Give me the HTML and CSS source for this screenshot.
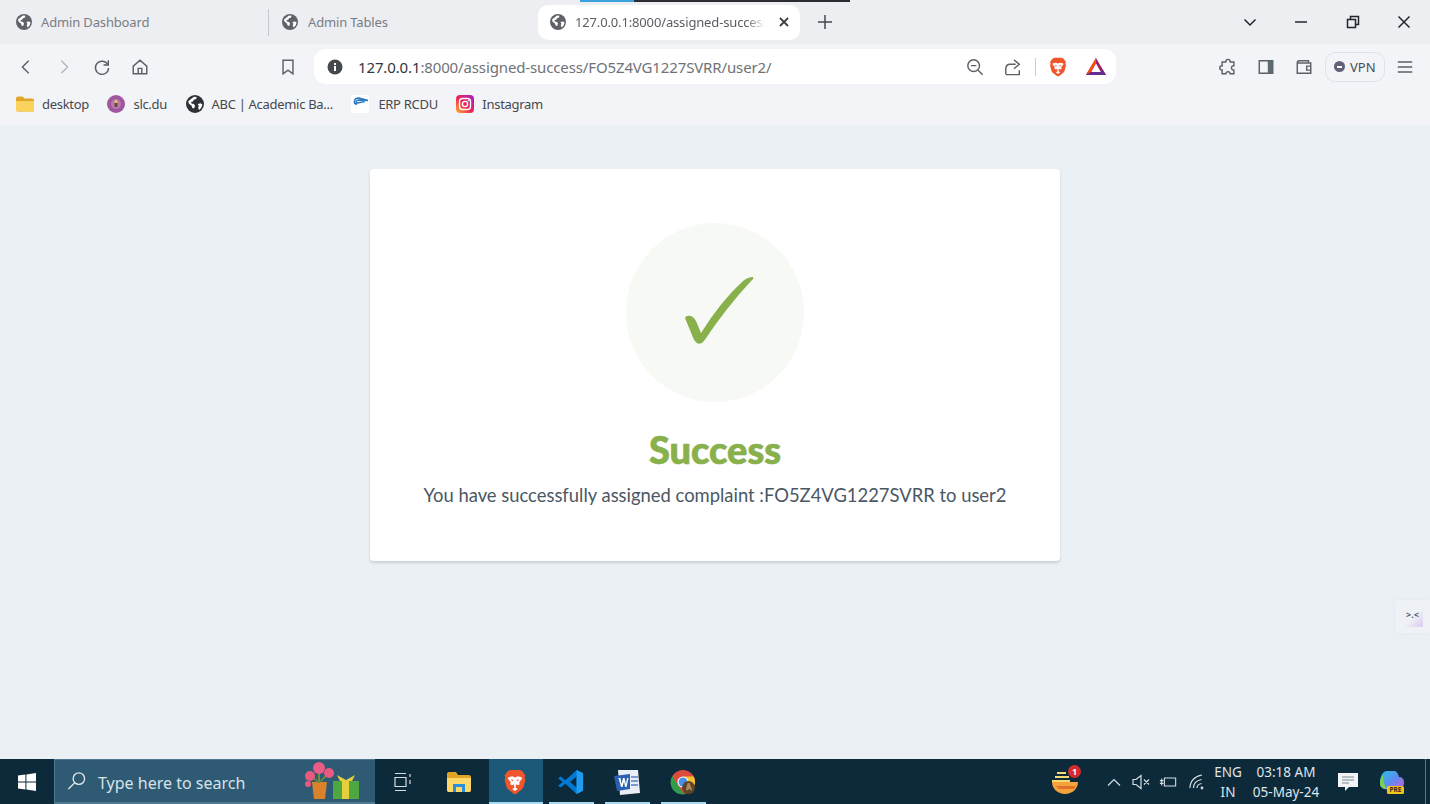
FILE: index.html
```html
<!DOCTYPE html>
<html lang="en">
<head>
<meta charset="utf-8"/>
<meta content="width=device-width, initial-scale=1.0" name="viewport"/>
<title>Assigned Success</title>
<link rel="stylesheet" href="styles.css">
</head>
<body>
<svg class="defs" width="0" height="0">
  <symbol id="globe" viewBox="0 0 16 16">
    <circle cx="8" cy="8" r="8" fill="currentColor"/>
    <path fill="#fff" d="M2 5.5 4.5 3.5 7 1.6 9.5 1.8 9 3.6 7 4.2 6.2 5.8 4.6 6 4.8 7.6 7 8 8 9.6 7.2 12 5.6 11.6 5 9.6 2.6 7.8ZM10.4 8 13 7.4 14.6 8.4 13.6 11.4 11.6 13.4 10.8 11.4 11.4 9.8Z"/>
  </symbol>
  <symbol id="brave" viewBox="0 0 24 24">
    <path fill="#f0562a" d="M12 1h5l2.2 1.6L21.6 6l-.8 2 .8 2-1.7 6.4c-.4 1.3-1.2 2.2-2.3 3L12.9 23h-1.8l-4.7-3.6c-1.1-.8-1.9-1.7-2.3-3L2.4 10l.8-2-.8-2 2.4-3.4L7 1z"/>
    <path fill="#fff" d="M6 7.5 9.5 6.8 12 7.8l2.500-1L18 7.5l.6 1.300-2.800 3.400.7 1.800-2.300 1-1.200-1-.4 3.200 2 1.200-2.600 2-2.600-2 2-1.200-.4-3.200-1.200 1-2.300-1 .7-1.800L5.400 8.800z"/>
    <path fill="#f0562a" d="M8 9.500l2.600.6-1 1.500zM16 9.500l-2.600.6 1 1.500z"/>
  </symbol>
</svg>

<div class="tab-strip">
  <div class="load-line"><span></span></div>
  <div class="tab tab-first">
    <svg class="fav"><use href="#globe"/></svg>
    <span class="tab-title">Admin Dashboard</span>
  </div>
  <div class="tab tab-second">
    <svg class="fav"><use href="#globe"/></svg>
    <span class="tab-title">Admin Tables</span>
  </div>
  <div class="tab tab-active">
    <svg class="fav"><use href="#globe"/></svg>
    <span class="tab-title">127.0.0.1:8000/assigned-success</span>
    <svg class="tab-close" viewBox="0 0 12 12"><path d="M2 2l8 8M10 2l-8 8"/></svg>
  </div>
  <svg class="new-tab" viewBox="0 0 14 14"><path d="M7 0v14M0 7h14"/></svg>
  <div class="win-controls">
    <svg viewBox="0 0 14 14"><path d="M1.5 4.500 7 10l5.500-5.500"/></svg>
    <svg viewBox="0 0 14 14"><path d="M1 7h12"/></svg>
    <svg viewBox="0 0 14 14"><path d="M1.5 4.500h8v8h-8zM4.500 4.500v-3h8v8h-3"/></svg>
    <svg viewBox="0 0 14 14"><path d="M1.5 1.500l11 11M12.500 1.500l-11 11"/></svg>
  </div>
</div>

<div class="toolbar">
  <div class="tool"><svg viewBox="0 0 20 20"><path d="M13 3 6 10l7 7"/></svg></div>
  <div class="tool tool-off"><svg viewBox="0 0 20 20"><path d="M7 3l7 7-7 7"/></svg></div>
  <div class="tool"><svg viewBox="0 0 20 20"><path d="M16.5 7.500A7.300 7.300 0 1 0 17.300 11M17 2.500v5.300h-5.300"/></svg></div>
  <div class="tool"><svg viewBox="0 0 20 20"><path d="M2.5 9 10 2.500 17.500 9v8.500h-15zM8 17.500v-6h4v6"/></svg></div>
  <div class="tool tool-mark"><svg viewBox="0 0 20 20"><path d="M4.5 2.500h11v15L10 13.500l-5.500 4z"/></svg></div>
  <div class="address">
    <svg class="info" viewBox="0 0 16 16"><circle cx="8" cy="8" r="7.5" fill="#45484d"/><path fill="#fff" d="M7 7h2v5H7zM7 4h2v2H7z"/></svg>
    <span class="url"><b>127.0.0.1</b>:8000/assigned-success/FO5Z4VG1227SVRR/user2/</span>
    <div class="tool addr-zoom"><svg viewBox="0 0 20 20"><circle cx="8.5" cy="8.500" r="6.500"/><path d="M5.5 8.500h6M13.500 13.500l5 5"/></svg></div>
    <div class="tool"><svg viewBox="0 0 20 20"><path d="M2 18v-6c0-3 2-5 5-5h6M11 2l6 5-6 5M2 18.500h15v-5"/></svg></div>
    <span class="addr-divider"></span>
    <svg class="addr-brave"><use href="#brave"/></svg>
    <svg class="addr-bat" viewBox="0 0 20 20">
      <path fill="#9e1f63" d="M10 1 20 18H0z"/>
      <path fill="#662d91" d="M0 18h20l-2.700-4.500H2.700z"/>
      <path fill="#ff5000" d="M10 1 0 18l4.500-3L10 6z"/>
      <path fill="#fff" d="M10 6.500 14.800 15H5.200z"/>
    </svg>
  </div>
  <div class="tool tool-ext"><svg viewBox="0 0 20 20"><path d="M7.5 4.500c0-4 5-4 5 0h4v4.200c-3.500-.5-3.500 5 0 4.600v4.200h-4.200c.5-3-5-3-4.600 0H3.500v-4.200c-3.500.4-3.500-5 0-4.600V4.500z"/></svg></div>
  <div class="tool"><svg viewBox="0 0 20 20"><path d="M2.5 3h15v14h-15z"/><path class="solid" d="M12 3h5.500v14H12z"/></svg></div>
  <div class="tool"><svg viewBox="0 0 20 20"><path d="M2.5 5.500c0-1.500 1-2.500 2.500-2.500h10v2.500M2.500 5.500h15v11.500h-15zM18 9h-5v4.500h5"/></svg></div>
  <div class="vpn"><span class="vpn-dot"></span>VPN</div>
  <div class="tool"><svg viewBox="0 0 20 20"><path d="M2 4.500h16M2 10h16M2 15.500h16"/></svg></div>
</div>

<div class="bookmarks">
  <div class="mark">
    <svg viewBox="0 0 18 16"><path fill="#e0a526" d="M0 2.500C0 1.200 1 .5 2 .5h4.500l2 2H16c1.200 0 2 .8 2 2V14c0 1-.8 1.500-2 1.500H2c-1 0-2-.6-2-1.500z"/><path fill="#fbd35c" d="M0 5h18v9c0 1-.8 1.500-2 1.500H2c-1 0-2-.6-2-1.500z"/></svg>
    desktop
  </div>
  <div class="mark">
    <svg viewBox="0 0 18 18"><circle cx="9" cy="9" r="9" fill="#a0559f"/><circle cx="9" cy="9" r="5" fill="#b77bb0"/><path fill="#6f4a2a" d="M7.5 8h3v4h-3z"/><circle cx="9" cy="6.500" r="1.500" fill="#e8c75c"/></svg>
    slc.du
  </div>
  <div class="mark mark-dark">
    <svg><use href="#globe"/></svg>
    ABC | Academic Ba...
  </div>
  <div class="mark mark-erp">
    <svg viewBox="0 0 18 18"><rect width="18" height="18" fill="#fff"/><path fill="none" stroke="#2a78c2" stroke-width="1.5" d="M6 9.500C2 8.500 2.500 3 8 3l9 2.500-9-.5c-3 0-3.500 2.500-1.500 3L14 6.500"/></svg>
    ERP RCDU
  </div>
  <div class="mark">
    <svg viewBox="0 0 18 18">
      <defs><linearGradient id="insta" x1="0" y1="1" x2="1" y2="0"><stop offset="0" stop-color="#fdb52b"/><stop offset=".45" stop-color="#f0264f"/><stop offset="1" stop-color="#a41fd0"/></linearGradient></defs>
      <rect width="18" height="18" rx="4" fill="url(#insta)"/>
      <rect x="3.5" y="3.5" width="11" height="11" rx="3" fill="none" stroke="#fff" stroke-width="1.400"/>
      <circle cx="9" cy="9" r="2.600" fill="none" stroke="#fff" stroke-width="1.400"/>
      <circle cx="12.5" cy="5.500" r=".8" fill="#fff"/>
    </svg>
    Instagram
  </div>
</div>

<main class="page">
  <div class="card">
    <div class="check-circle">
      <svg viewBox="0 0 178 178"><path d="M59 95Q60 92 65 93 68 94 70 98L75 110Q95 78 117 58 122 54 127 54 128 56 125 58 100 85 78 118 75 122 71 120 68 118 66 112Z"/></svg>
    </div>
    <h1>Success</h1>
    <p>You have successfully assigned complaint :FO5Z4VG1227SVRR to user2</p>
  </div>
  <div class="side-widget"><span>&gt;.&lt;</span></div>
</main>

<footer class="taskbar">
  <div class="start">
    <svg viewBox="0 0 18 18"><path fill="#fff" d="M0 2.600 7.400 1.500v7H0zM8.400 1.400 18 0v8.500H8.400zM0 9.500h7.400v7L0 15.400zM8.400 9.500H18V18l-9.600-1.400z"/></svg>
  </div>
  <div class="search">
    <svg class="search-lens" viewBox="0 0 20 20"><circle cx="12.5" cy="7.500" r="6"/><path d="M8 12 1.500 18.500"/></svg>
    <span class="search-text">Type here to search</span>
    <svg class="search-art" viewBox="0 0 58 38">
      <path fill="#d9822b" d="M9 20h15l-2 17H11z"/>
      <path fill="#6f8f3a" d="M15 8h2v13h-2zM7 12l8 7-1 1-8-7zM25 10l-8 9 1 1 8-8z"/>
      <circle cx="7" cy="14" r="5" fill="#ea5a80"/><circle cx="16" cy="6" r="6" fill="#e85c86"/><circle cx="26" cy="11" r="5" fill="#ea5a80"/><circle cx="5" cy="22" r="3" fill="#ea5a80"/>
      <path fill="#4fa742" d="M30 19h26v18H30z"/>
      <path fill="#e6cf3d" d="M39 19h7v18h-7zM37 19l-3-6 9 5 9-5-3 6z"/>
    </svg>
  </div>
  <div class="task-item">
    <svg class="task-view" viewBox="0 0 20 20"><path d="M3 1.500h11M3 18.500h11M3 5.500h11v9H3zM18 2v3M18 8v4"/></svg>
  </div>
  <div class="task-item">
    <svg class="task-files" viewBox="0 0 24 20"><path fill="#e0a526" d="M0 2c0-1 .8-2 2-2h7l2 3h11c1 0 2 1 2 2v13c0 1-1 2-2 2H2c-1 0-2-1-2-2z"/><path fill="#fcd769" d="M0 6h24v12c0 1-1 2-2 2H2c-1 0-2-1-2-2z"/><path fill="#2a8fd8" d="M6 12h12v8h-3v-5H9v5H6z"/></svg>
  </div>
  <div class="task-item task-active open">
    <svg><use href="#brave"/></svg>
  </div>
  <div class="task-item open">
    <svg viewBox="0 0 28 28"><path fill="#0078d4" d="M20 1l7 3.500v19L20 27 8 16l-5 4-3-2 5-4-5-4 3-2 5 4zM20 8l-7 6 7 6z"/><path fill="#1f9cf0" d="M20 1l7 3.500v19L20 27z"/></svg>
  </div>
  <div class="task-item open">
    <svg viewBox="0 0 26 26"><path fill="#e9edf5" d="M4 1h20l2 23-20 2z"/><path fill="#2b5fb0" d="M0 7l16-2v15L3 22z"/><path fill="#fff" d="M4.500 9h2l1 6 1.500-6h1.500l1.500 6 1-6h1.500l-2 9h-1.500L10 12.500 8.500 18H7z"/><path fill="#7b9ad0" d="M17 7h7v2h-7zM17 11h7v2h-7zM17 15h7v2h-7z"/></svg>
  </div>
  <div class="task-item open">
    <svg viewBox="0 0 28 28">
      <circle cx="14" cy="14" r="13" fill="#dd4b3e"/>
      <path fill="#f7c32d" d="M14 8h11.500a13 13 0 0 1-7 18l-4-8z"/>
      <path fill="#2f9e4a" d="M2.600 7.500 9 18l5 8.500 4 .2A13 13 0 0 1 2.600 7.500z"/>
      <circle cx="14" cy="14" r="6" fill="#fff"/><circle cx="14" cy="14" r="4.800" fill="#4a8fe8"/>
      <circle cx="20" cy="20" r="7" fill="#5d4527"/><path fill="#b08a5a" d="M19 15h2l3 8h-2l-1-2-2 2h-2z"/>
    </svg>
  </div>
  <div class="tray">
    <div class="tray-sweet">
      <svg viewBox="0 0 28 26"><path fill="#f2a33c" d="M1 13h26c0 7-6 12-13 12S1 20 1 13z"/><path fill="#f7d774" d="M4 7h14v2H4zM1 11h18v2H1zM6 3h9v2H6z"/><path fill="#e5702a" d="M5 17h20l-2 3H8z"/></svg>
      <span class="badge">1</span>
    </div>
    <div class="tray-item"><svg viewBox="0 0 16 16"><path d="M2 11.500 8 5.500l6 6"/></svg></div>
    <div class="tray-item"><svg viewBox="0 0 18 16"><path d="M1 5.500h3L9 1.500v13l-5-4H1zM12 5.500l5 5M17 5.500l-5 5"/></svg></div>
    <div class="tray-item"><svg viewBox="0 0 20 16"><path d="M6 3.500h12.500v9H6zM1 6.500h4M1 9.500h4M3 4v8"/></svg></div>
    <div class="tray-item tray-wifi"><svg viewBox="0 0 16 16"><path d="M1 14C1 7 6 2 13 1M4.500 14c0-4 3-7.500 8-8.500M8 14c0-2 1.500-4 4.500-4.500"/><circle cx="13" cy="14" r=".8"/></svg></div>
    <div class="tray-lang"><span>ENG</span><span>IN</span></div>
    <div class="tray-clock"><span>03:18 AM</span><span>05-May-24</span></div>
    <div class="tray-item tray-notify"><svg viewBox="0 0 20 20"><path class="note" d="M0 1h20v14h-9l-4 4v-4H0z"/><path class="note-lines" d="M4 5h12M4 8h12M4 11h7"/></svg></div>
    <div class="tray-copilot">
      <svg viewBox="0 0 26 24">
        <defs><linearGradient id="cop" x1="0" y1="0" x2="1" y2="1"><stop offset="0" stop-color="#27c4e8"/><stop offset=".5" stop-color="#5a8cf0"/><stop offset="1" stop-color="#d55bd0"/></linearGradient></defs>
        <path fill="url(#cop)" d="M8 1h7c2 0 3 1 4 3l1 3c3 0 5 2 5 5 0 4-2 8-6 8h-8l-6-1c-3-1-4-3-4-6C1 8 3 1 8 1z"/>
        <path fill="#7bd24a" d="M1 13c0-3 1-6 3-8 0 5 1 10 4 14-4 0-7-2-7-6z"/>
        <rect x="8" y="16" width="17" height="8" rx="1.5" fill="#f0c419"/>
      </svg>
      <span>PRE</span>
    </div>
    <span class="show-desktop"></span>
  </div>
</footer>
</body>
</html>
```

FILE: styles.css
```css
* {
  box-sizing: border-box;
}
html, body {
  margin: 0;
  height: 100%;
}
body {
  display: flex;
  flex-direction: column;
  height: 804px;
  overflow: hidden;
  font-family: 'Noto Sans', 'Open Sans', sans-serif;
  background-color: #ebf0f4;
  color: #45484d;
}
.defs {
  position: absolute;
}
svg {
  display: block;
}

/* tabs */
.tab-strip {
  position: relative;
  display: flex;
  align-items: center;
  height: 44px;
  flex-shrink: 0;
  background-color: #eceef2;
}
.load-line {
  position: absolute;
  top: 0;
  left: 580px;
  width: 270px;
  height: 2px;
  background-color: #2b2d33;
}
.load-line span {
  display: block;
  width: 54px;
  height: 2px;
  background-color: #3aa3de;
}
.tab {
  display: flex;
  align-items: center;
  gap: 9px;
  height: 35px;
  width: 269px;
  font-size: 13px;
  letter-spacing: -0.15px;
  color: #7a7d83;
  white-space: nowrap;
}
.tab-first {
  padding-left: 16px;
  border-right: 1px solid #c4c7cc;
  height: 27px;
}
.tab-second {
  padding-left: 13px;
  gap: 10px;
}
.tab-active {
  width: 262px;
  padding: 0 10px 0 12px;
  gap: 9px;
  background-color: #fff;
  border-radius: 10px;
  color: #5a5d63;
}
.tab-title {
  min-width: 0;
  flex: 1;
  -webkit-mask-image: linear-gradient(to right, #000 90%, transparent);
  mask-image: linear-gradient(to right, #000 90%, transparent);
}
.tab-first .tab-title, .tab-second .tab-title {
  -webkit-mask-image: none;
  mask-image: none;
}
.fav {
  width: 16px;
  height: 16px;
  flex-shrink: 0;
  color: #5f6368;
}
.tab-close {
  width: 12px;
  height: 12px;
  flex-shrink: 0;
  margin-left: 4px;
  fill: none;
  stroke: #3c3f44;
  stroke-width: 1.8;
}
.new-tab {
  width: 14px;
  height: 14px;
  margin-left: 18px;
  fill: none;
  stroke: #45484d;
  stroke-width: 1.5;
}
.win-controls {
  display: flex;
  align-items: center;
  gap: 37.5px;
  margin-left: auto;
  padding-right: 19px;
}
.win-controls svg {
  width: 14px;
  height: 14px;
  fill: none;
  stroke: #22252a;
  stroke-width: 1.5;
}

/* toolbar */
.toolbar {
  display: flex;
  align-items: center;
  height: 44px;
  flex-shrink: 0;
  padding: 1px 0 0 7px;
  background-color: #f3f4f7;
}
.tool {
  display: flex;
  align-items: center;
  justify-content: center;
  width: 38px;
  height: 34px;
  flex-shrink: 0;
}
.tool svg {
  width: 18px;
  height: 18px;
  fill: none;
  stroke: #5c6066;
  stroke-width: 1.6;
}
.tool svg .solid {
  fill: #5c6b72;
  stroke: none;
}
.tool-off svg {
  stroke: #b4b7bc;
}
.tool-mark {
  margin-left: 110px;
}
.address {
  display: flex;
  align-items: center;
  width: 802px;
  height: 35px;
  margin-left: 7px;
  padding-left: 13px;
  background-color: #fff;
  border-radius: 12px;
}
.info {
  width: 16px;
  height: 16px;
  flex-shrink: 0;
}
.url {
  margin-left: 15px;
  font-size: 15px;
  letter-spacing: -0.13px;
  color: #6f7277;
  white-space: nowrap;
}
.url b {
  font-weight: 400;
  color: #33363b;
}
.addr-zoom {
  margin-left: auto;
}
.addr-divider {
  width: 1px;
  height: 18px;
  margin: 0 12px 0 3px;
  background-color: #c9ccd0;
}
.addr-brave {
  width: 20px;
  height: 22px;
  flex-shrink: 0;
}
.addr-bat {
  width: 20px;
  height: 20px;
  margin: 0 10px 0 18px;
  flex-shrink: 0;
}
.tool-ext {
  margin-left: 93px;
}
.vpn {
  display: flex;
  align-items: center;
  gap: 5px;
  width: 60px;
  height: 30px;
  margin: 0 1px 0 2px;
  padding-left: 8px;
  font-size: 13px;
  color: #4a4d55;
  border: 1.5px solid #dfe3e8;
  border-radius: 10px;
}
.vpn-dot {
  position: relative;
  width: 11px;
  height: 11px;
  border-radius: 50%;
  background-color: #5f6278;
}
.vpn-dot::after {
  content: "";
  position: absolute;
  left: 3px;
  top: 5px;
  width: 5px;
  height: 1.5px;
  background-color: #fff;
}

/* bookmarks */
.bookmarks {
  display: flex;
  align-items: center;
  gap: 18.5px;
  height: 37px;
  flex-shrink: 0;
  padding: 0 0 5px 16px;
  background-color: #f3f4f7;
  font-size: 13px;
  letter-spacing: -0.3px;
  color: #45484d;
}
.mark {
  display: flex;
  align-items: center;
  gap: 8px;
  white-space: nowrap;
}
.mark svg {
  width: 18px;
  height: 18px;
  flex-shrink: 0;
}
.mark-dark svg {
  color: #2f3136;
}
.mark-erp {
  gap: 9px;
}

/* page */
.page {
  position: relative;
  flex: 1;
  display: flex;
  justify-content: center;
  align-items: flex-start;
  padding-top: 44px;
}
.card {
  display: flex;
  flex-direction: column;
  align-items: center;
  width: 690px;
  height: 392px;
  padding-top: 54px;
  background-color: #fff;
  border-radius: 4px;
  box-shadow: 0 2px 3px #c8d0da;
  font-family: 'Lato', 'Noto Sans', sans-serif;
}
.check-circle {
  width: 178px;
  height: 179px;
  border-radius: 50%;
  background-color: #f7f9f4;
}
.check-circle svg {
  width: 178px;
  height: 178px;
  fill: #88b04b;
}
.card h1 {
  margin: 23px 0 0;
  font-size: 38px;
  line-height: 48px;
  font-weight: 900;
  color: #88b04b;
  -webkit-text-stroke: 0.7px #88b04b;
}
.card p {
  margin: 9px 0 0;
  font-size: 18.4px;
  line-height: 26px;
  color: #4a5764;
}
.side-widget {
  position: absolute;
  right: 0;
  top: 475px;
  display: flex;
  align-items: center;
  justify-content: center;
  width: 35px;
  height: 33px;
  font-size: 9px;
  font-weight: 700;
  color: #555a66;
  background-color: #eef2f6;
  border-radius: 4px 0 0 4px;
  box-shadow: 0 0 4px #e2e7ec;
}
.side-widget span {
  width: 20px;
  height: 20px;
  padding-top: 1px;
  text-align: center;
  background: linear-gradient(135deg, #eef2f6 50%, #dcc8f0);
}

/* taskbar */
.taskbar {
  display: flex;
  align-items: stretch;
  height: 45px;
  flex-shrink: 0;
  background-color: #0d2a3b;
  color: #dfe6ea;
}
.start {
  display: flex;
  align-items: center;
  justify-content: center;
  width: 54px;
}
.start svg {
  width: 18px;
  height: 18px;
}
.search {
  display: flex;
  align-items: center;
  width: 321px;
  padding-left: 12px;
  font-size: 16px;
  color: #d8e2e8;
  background-color: #2f5a73;
  border: 1px solid #4e7a91;
  border-bottom-width: 2px;
  border-right: none;
}
.search-text {
  padding-top: 3px;
}
.search-lens {
  width: 19px;
  height: 20px;
  margin-right: 12px;
  fill: none;
  stroke: #e3eaee;
  stroke-width: 1.4;
}
.search-art {
  width: 58px;
  height: 38px;
  margin-left: auto;
  margin-right: 14px;
}
.task-item {
  position: relative;
  display: flex;
  align-items: center;
  justify-content: center;
  width: 56px;
}
.task-item svg {
  position: relative;
  width: 28px;
  height: 26px;
}
.task-item .task-view {
  width: 20px;
  height: 20px;
  margin-right: 2px;
  fill: none;
  stroke: #d5dde2;
  stroke-width: 1.2;
}
.task-item .task-files {
  width: 24px;
  height: 20px;
}
.task-active::before {
  content: "";
  position: absolute;
  left: 2px;
  right: 0;
  top: 0;
  bottom: 0;
  background-color: #1c5877;
}
.open::after {
  content: "";
  position: absolute;
  left: 6px;
  right: 5px;
  bottom: 0;
  height: 2px;
  background-color: #a9d9f0;
}
.task-active::after {
  left: 2px;
  right: 0;
}
.tray {
  display: flex;
  align-items: center;
  gap: 1px;
  margin-left: auto;
  font-size: 13.5px;
}
.tray-sweet {
  position: relative;
  width: 28px;
  height: 26px;
  margin-right: 21px;
}
.badge {
  position: absolute;
  top: -4px;
  right: -2px;
  width: 13px;
  height: 13px;
  font-size: 9px;
  line-height: 13px;
  font-weight: 700;
  text-align: center;
  color: #fff;
  background-color: #d42c2c;
  border-radius: 50%;
}
.tray-item {
  display: flex;
  align-items: center;
  justify-content: center;
  width: 26px;
}
.tray-item svg {
  width: 18px;
  height: 16px;
  fill: none;
  stroke: #d5dde2;
  stroke-width: 1.2;
}
.tray-wifi {
  margin-left: 2px;
}
.tray-lang, .tray-clock {
  display: flex;
  flex-direction: column;
  align-items: center;
  gap: 1px;
  padding-top: 2px;
  line-height: 19px;
}
.tray-lang {
  width: 32px;
  margin-left: 1px;
}
.tray-clock {
  width: 74px;
  margin-left: 4px;
}
.tray-notify {
  margin-left: 11px;
}
.tray-notify svg {
  width: 20px;
  height: 20px;
}
.tray-notify .note {
  fill: #f2f4f6;
  stroke: none;
}
.tray-notify .note-lines {
  stroke: #7c8a94;
}
.tray-copilot {
  position: relative;
  width: 26px;
  height: 24px;
  margin-left: 17px;
}
.tray-copilot svg {
  width: 26px;
  height: 24px;
}
.tray-copilot span {
  position: absolute;
  left: 8px;
  bottom: 0;
  width: 17px;
  font-size: 6.5px;
  line-height: 8px;
  font-weight: 700;
  text-align: center;
  color: #33291a;
}
.show-desktop {
  align-self: stretch;
  width: 1px;
  margin-left: 19px;
  margin-right: 4px;
  background-color: #5d7584;
}
```
